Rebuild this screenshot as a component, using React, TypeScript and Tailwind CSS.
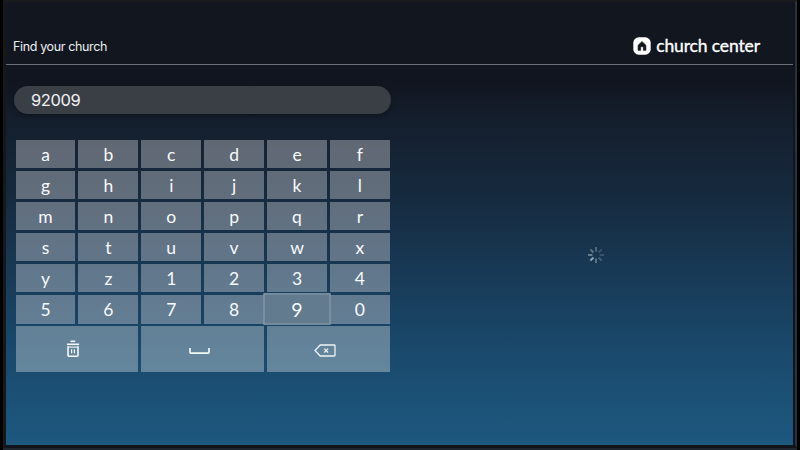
import React from 'react';

const keys = 'abcdefghijklmnopqrstuvwxyz1234567890'.split('');

function TrashIcon() {
  return (
    <svg width="14" height="18" viewBox="0 0 14 18" fill="none" stroke="#f4f7f9" strokeWidth="1.6">
      <path d="M4.6 1.3H9.2" />
      <path d="M0.9 4.3H13.1" />
      <path d="M2 6.3V15.2a1 1 0 0 0 1 1h8a1 1 0 0 0 1-1V6.3" />
      <path d="M2 7.1H12" strokeWidth="1.1" />
      <path d="M5.6 9.2V13.2M8.4 9.2V13.2" strokeWidth="1.2" />
    </svg>
  );
}

function SpaceIcon() {
  return (
    <svg width="21" height="8" viewBox="0 0 21 8" fill="none" stroke="#f4f7f9" strokeWidth="1.7">
      <path d="M1 1V5.2a.9.9 0 0 0 .9.9H19.1a.9.9 0 0 0 .9-.9V1" />
    </svg>
  );
}

function BackspaceIcon() {
  return (
    <svg width="22" height="13" viewBox="0 0 22 13" fill="none" stroke="#eef3f6" strokeWidth="1.3">
      <path d="M6.2 1H20.2a.8.8 0 0 1 .8.8V11.2a.8.8 0 0 1-.8.8H6.2L1 6.5Z" />
      <path d="M10.3 4.6L14 8.5M14 4.6L10.3 8.5" />
    </svg>
  );
}

const spokes = [0.35, 0.2, 0.22, 0.28, 0.42, 0.75, 0.5, 0.42];

function Spinner() {
  return (
    <svg width="18" height="18" viewBox="-9 -9 18 18" stroke="#c3cbd0" strokeWidth="1.9">
      {spokes.map((opacity, i) => (
        <path key={i} d="M0 -3.6V-8" opacity={opacity} transform={`rotate(${i * 45})`} />
      ))}
    </svg>
  );
}

function Logo() {
  return (
    <div className="flex h-[20px] items-center">
      <svg width="18" height="18" viewBox="0 0 18 18" className="shrink-0">
        <rect x="0.3" y="0.3" width="17.4" height="17.4" rx="5.4" fill="#fff" />
        <path d="M5.1 13.3V8.3L9 4.6l3.9 3.7v5H10.4v-2.5a1.4 1.4 0 0 0-2.8 0v2.5Z" fill="#12161f" stroke="#12161f" strokeWidth=".7" strokeLinejoin="round" />
      </svg>
      <span className="ml-[5px] pb-px whitespace-nowrap font-['Lato',sans-serif] text-[17.5px] leading-[19px] font-normal tracking-[-0.12px] text-white [-webkit-text-stroke:0.35px_white]">
        church center
      </span>
    </div>
  );
}

export default function App() {
  return (
    <div className="h-[450px] w-[800px] overflow-hidden border-r-[3px] border-l-[3px] border-black bg-[#20262e]">
      <div className="h-[448px] border-t-2 border-r-2 border-b-[3px] border-l-[3px] border-t-[#191a1c] border-r-[#26323f] border-b-[#11151b] border-l-[#171819] bg-[#11151b] pr-[2px]">
        <div className="flex h-[443px] flex-col bg-[linear-gradient(180deg,#12171f_0%,#11151f_18%,#141d2b_25%,#162b40_45%,#183a57_62%,#1a4a6d_80%,#1d587f_100%)]">
          <header className="flex h-[63px] shrink-0 items-end justify-between border-b border-[#687079] pr-[33px] pb-[8px] pl-[7px]">
            <h1 className="font-['Inter',sans-serif] text-[12.5px] leading-[19px] tracking-[-0.36px] text-[#eceef0]">Find your church</h1>
            <Logo />
          </header>
          <main className="flex pt-[21px]">
            <section className="ml-2 w-[377px] shrink-0">
              <div className="flex h-7 items-center rounded-full bg-[#3a3f46] pl-[17px] font-['Inter',sans-serif] text-[16.5px] tracking-[-0.4px] text-[#f1f2f3] shadow-[0_2px_5px_rgba(0,0,0,0.3)]">
                92009
              </div>
              <div className="mt-[26px] ml-[1.6px] w-[374.2px] font-['Lato',sans-serif] text-[17.5px] text-[#f8fafb]">
                <div className="grid grid-cols-6 gap-x-[3.1px] gap-y-[3px]">
                  {keys.map((k) =>
                    k === '9' ? (
                      <button key={k} className="z-10 flex h-[28.1px] scale-[1.12] items-center justify-center border border-[#8b9fae] bg-[#627b8e] pt-px leading-none">
                        {k}
                      </button>
                    ) : (
                      <button key={k} className="flex h-[28.1px] items-center justify-center bg-[#f4f1f2]/34 pt-[1.4px] leading-none">
                        {k}
                      </button>
                    ),
                  )}
                </div>
                <div className="mt-[2.7px] grid grid-cols-3 gap-x-[3.1px]">
                  <button className="flex h-[46px] items-center justify-center bg-[#eff5f5]/34 pr-[8px] pb-[1px]"><TrashIcon /></button>
                  <button className="flex h-[46px] items-center justify-center bg-[#eff5f5]/34 pt-[3px] pr-[7px]"><SpaceIcon /></button>
                  <button className="flex h-[46px] items-center justify-center bg-[#eff5f5]/34 pt-[3px] pr-[7px]"><BackspaceIcon /></button>
                </div>
              </div>
            </section>
            <section className="flex flex-1 justify-center pt-[160px] pl-[8px]"><Spinner /></section>
          </main>
        </div>
      </div>
    </div>
  );
}
